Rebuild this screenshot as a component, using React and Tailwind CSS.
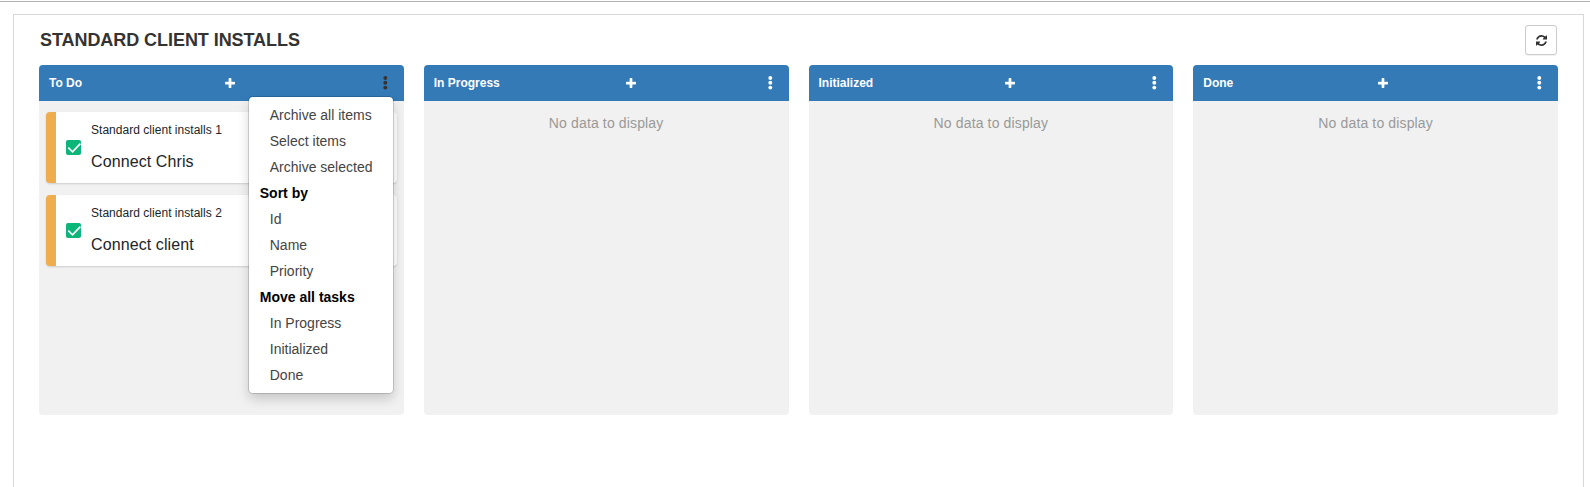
const PLUS =
  'M1600 736v192q0 40-28 68t-68 28h-416v416q0 40-28 68t-68 28h-192q-40 0-68-28t-28-68v-416h-416q-40 0-68-28t-28-68v-192q0-40 28-68t68-28h416v-416q0-40 28-68t68-28h192q40 0 68 28t28 68v416h416q40 0 68 28t28 68z';
const REFRESH =
  'M1511 1056q0 5-1 7-64 268-268 434.5t-478 166.5q-146 0-282.5-55t-243.5-157l-129 129q-19 19-45 19t-45-19-19-45v-448q0-26 19-45t45-19h448q26 0 45 19t19 45-19 45l-137 137q71 66 161 102t187 36q134 0 250-65t186-179q11-17 53-117 8-23 30-23h192q13 0 22.5 9.5t9.5 22.5zm25-800v448q0 26-19 45t-45 19h-448q-26 0-45-19t-19-45 19-45l138-138q-148-137-349-137-134 0-250 65t-186 179q-11 17-53 117-8 23-30 23h-199q-13 0-22.5-9.5t-9.5-22.5v-7q65-268 270-434.5t480-166.5q146 0 284 55.5t245 156.5l130-129q19-19 45-19t45 19 19 45z';

const columns = [
  {
    title: 'To Do',
    menuOpen: true,
    cards: [
      { code: 'Standard client installs 1', name: 'Connect Chris' },
      { code: 'Standard client installs 2', name: 'Connect client' },
    ],
  },
  { title: 'In Progress' },
  { title: 'Initialized' },
  { title: 'Done' },
];

const menu = [
  { label: 'Archive all items' },
  { label: 'Select items' },
  { label: 'Archive selected' },
  { label: 'Sort by', heading: true },
  { label: 'Id' },
  { label: 'Name' },
  { label: 'Priority' },
  { label: 'Move all tasks', heading: true },
  { label: 'In Progress' },
  { label: 'Initialized' },
  { label: 'Done' },
];

function Dots() {
  return (
    <svg className="h-4 w-4" viewBox="0 0 16 16" fill="currentColor">
      <circle cx="7.3" cy="3" r="1.95" />
      <circle cx="7.3" cy="7.8" r="1.95" />
      <circle cx="7.3" cy="12.6" r="1.95" />
    </svg>
  );
}

function Menu() {
  return (
    <ul className="absolute top-8 right-[11px] z-10 w-36 rounded bg-white py-[5px] shadow-[0_6px_12px_rgba(0,0,0,0.175),0_0_0_1px_rgba(0,0,0,0.15)]">
      {menu.map((item) => (
        <li
          key={item.label}
          className={
            item.heading
              ? 'h-[26px] pl-[11px] text-sm leading-[26px] font-bold whitespace-nowrap text-black'
              : 'h-[26px] pl-[21px] text-sm leading-[26px] whitespace-nowrap text-[#444]'
          }
        >
          {item.label}
        </li>
      ))}
    </ul>
  );
}

function Card({ code, name }) {
  return (
    <div className="flex h-[71px] items-center rounded border-l-10 border-[#f0ad4e] bg-white pl-[10px] shadow-[0_1px_2px_rgba(0,0,0,0.15)]">
      <svg className="h-[15px] w-[15px] shrink-0" viewBox="0 0 15 15">
        <rect width="15" height="15" rx="2" fill="#0cb578" />
        <path d="M2.3 7.6l4.2 4.2L14.4 3.6" fill="none" stroke="#fff" strokeWidth="1.7" />
      </svg>
      <div className="ml-[10px] flex flex-col pb-[2px] whitespace-nowrap text-[#212529]">
        <span className="text-xs leading-5 tracking-[0.03px]">{code}</span>
        <span className="mt-[10px] text-base leading-6 tracking-[0.1px]">{name}</span>
      </div>
    </div>
  );
}

function Column({ title, cards, menuOpen }) {
  return (
    <section className="relative flex h-[350px] flex-col rounded bg-[#f1f1f1]">
      <header className="flex h-9 shrink-0 items-center justify-between rounded-t bg-[#337ab7] px-[10px] text-white">
        <h2 className="text-xs font-bold">{title}</h2>
        <svg className="h-[13px] w-[10px]" viewBox="192 0 1408 1792" fill="currentColor">
          <path d={PLUS} />
        </svg>
        <span className={menuOpen ? 'text-[#333]' : 'text-white'}>
          <Dots />
        </span>
      </header>
      {cards ? (
        <div className="flex flex-col gap-3 px-[7px] pt-[11px]">
          {cards.map((card) => (
            <Card key={card.code} {...card} />
          ))}
        </div>
      ) : (
        <p className="pt-3 text-center text-sm leading-5 tracking-[0.14px] text-[#999]">
          No data to display
        </p>
      )}
      {menuOpen && <Menu />}
    </section>
  );
}

export default function App() {
  return (
    <div className="h-[487px] overflow-hidden bg-white px-[6px] pt-px font-['Liberation_Sans',Arial,sans-serif]">
      <div className="-mx-[6px] h-px bg-[#b0b0b0]" />
      <main className="mt-3 mr-0 ml-[7px] h-[480px] w-[1571px] border border-[#d8d8d8] bg-white px-[25px]">
        <div className="flex h-[50px] items-start justify-between pr-px pl-px">
          <h1 className="mt-[13px] text-lg leading-6 font-bold tracking-[-0.06px] text-[#333]">
            STANDARD CLIENT INSTALLS
          </h1>
          <button className="mt-[10px] flex h-[30px] w-8 items-center justify-center rounded-[3px] border border-[#ccc] bg-white text-[#333] shadow-[0_1px_1px_rgba(0,0,0,0.06)]">
            <svg className="h-[13px] w-[11px]" viewBox="0 0 1536 1792" fill="currentColor">
              <path d={REFRESH} />
            </svg>
          </button>
        </div>
        <div className="grid grid-cols-4 gap-5">
          {columns.map((column) => (
            <Column key={column.title} {...column} />
          ))}
        </div>
      </main>
    </div>
  );
}
